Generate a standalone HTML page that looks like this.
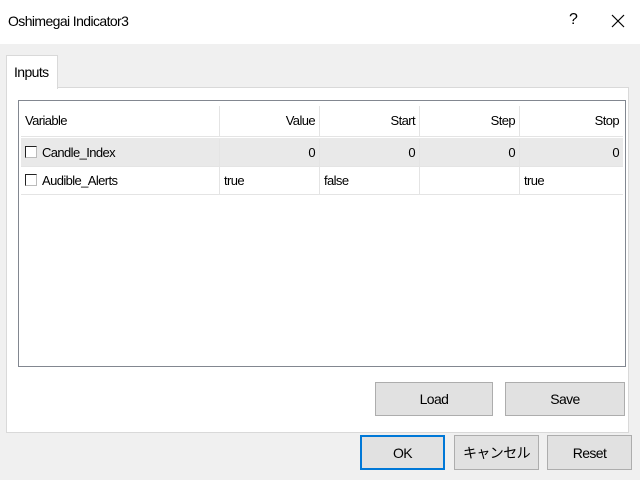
<!DOCTYPE html><html><head><style>
*{box-sizing:border-box;margin:0;padding:0}
body{width:640px;height:480px;background:#f0f0f0;font-family:"Liberation Sans","Noto Sans CJK JP",sans-serif;font-size:13px;letter-spacing:-0.6px;color:#000;position:relative;overflow:hidden}
.a{position:absolute}
.title{left:0;top:0;width:640px;height:44px;background:#fff}
.btn{position:absolute;background:#e1e1e1;border:1px solid #adadad;display:flex;align-items:center;justify-content:center;font-size:14px}
.cell{position:absolute;height:28px;line-height:28px;padding:0 4px;border-right:1px solid #e4e4e4}
.r{text-align:right}
.cb{display:inline-block;width:12px;height:12px;border:1px solid #222;border-right-color:#bbb;border-bottom-color:#bbb;background:#fff;vertical-align:-1px;margin-right:5px}
</style></head><body>
<div class="a title"></div>
<div class="a" style="left:8px;top:13px;font-size:14px">Oshimegai Indicator3</div>
<div class="a" style="left:569px;top:11px;font-size:16px">?</div>
<svg class="a" style="left:611px;top:14px" width="14" height="14"><path d="M1 1L13 13M13 1L1 13" stroke="#000" stroke-width="1.2"/></svg>
<div class="a" style="left:6px;top:87px;width:623px;height:346px;background:#fff;border:1px solid #d9d9d9"></div>
<div class="a" style="left:6px;top:55px;width:52px;height:34px;background:#fff;border:1px solid #d9d9d9;border-bottom:none;padding:8px 0 0 7px;font-size:14px">Inputs</div>
<div class="a" style="left:18px;top:100px;width:608px;height:267px;border:1px solid #828790;background:#fff"></div>
<div class="a" style="left:21px;top:103px;width:602px;height:34px;border-bottom:1px solid #e4e4e4"></div>
<div class="a" style="left:21px;top:138px;width:602px;height:28px;background:#e9e9e9"></div>
<div class="a" style="left:21px;top:166px;width:602px;height:29px;border-top:1px solid #e4e4e4;border-bottom:1px solid #e4e4e4"></div>
<div class="cell" style="left:21px;top:106px;width:199px;height:30px;line-height:30px">Variable</div>
<div class="cell r" style="left:220px;top:106px;width:100px;height:30px;line-height:30px">Value</div>
<div class="cell r" style="left:320px;top:106px;width:100px;height:30px;line-height:30px">Start</div>
<div class="cell r" style="left:420px;top:106px;width:100px;height:30px;line-height:30px">Step</div>
<div class="cell r" style="left:520px;top:106px;width:103px;height:30px;line-height:30px;border:none">Stop</div>
<div class="cell" style="left:21px;top:139px;width:199px"><span class="cb"></span>Candle_Index</div>
<div class="cell r" style="left:220px;top:139px;width:100px">0</div>
<div class="cell r" style="left:320px;top:139px;width:100px">0</div>
<div class="cell r" style="left:420px;top:139px;width:100px">0</div>
<div class="cell r" style="left:520px;top:139px;width:103px;border:none">0</div>
<div class="cell" style="left:21px;top:167px;width:199px"><span class="cb"></span>Audible_Alerts</div>
<div class="cell" style="left:220px;top:167px;width:100px">true</div>
<div class="cell" style="left:320px;top:167px;width:100px">false</div>
<div class="cell" style="left:420px;top:167px;width:100px"></div>
<div class="cell" style="left:520px;top:167px;width:103px;border:none">true</div>
<div class="btn" style="left:375px;top:382px;width:118px;height:34px">Load</div>
<div class="btn" style="left:505px;top:382px;width:120px;height:34px">Save</div>
<div class="btn" style="left:360px;top:435px;width:85px;height:35px;border:2px solid #0078d7">OK</div>
<div class="btn" style="left:454px;top:435px;width:85px;height:35px">キャンセル</div>
<div class="btn" style="left:547px;top:435px;width:85px;height:35px">Reset</div>
</body></html>
